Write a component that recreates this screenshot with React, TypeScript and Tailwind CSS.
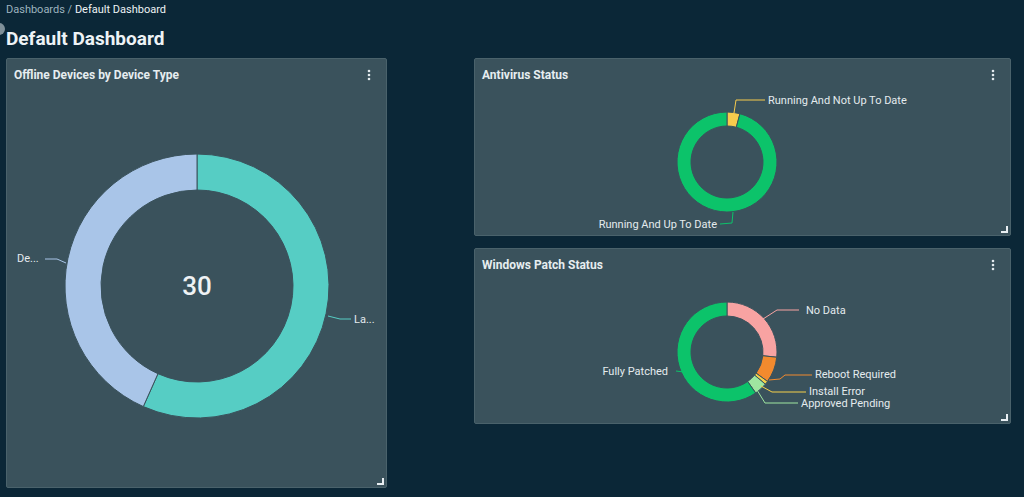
import React from "react";

const PANEL = "#3a525c";

type Seg = { from: number; to: number; color: string };

const pt = (cx: number, cy: number, r: number, deg: number) => {
  const a = ((deg - 90) * Math.PI) / 180;
  return [cx + r * Math.cos(a), cy + r * Math.sin(a)];
};

const arc = (cx: number, cy: number, ro: number, ri: number, a0: number, a1: number) => {
  const large = a1 - a0 > 180 ? 1 : 0;
  const [x0, y0] = pt(cx, cy, ro, a0);
  const [x1, y1] = pt(cx, cy, ro, a1);
  const [x2, y2] = pt(cx, cy, ri, a1);
  const [x3, y3] = pt(cx, cy, ri, a0);
  return `M${x0} ${y0} A${ro} ${ro} 0 ${large} 1 ${x1} ${y1} L${x2} ${y2} A${ri} ${ri} 0 ${large} 0 ${x3} ${y3} Z`;
};

const Donut = ({ cx, cy, ro, ri, segs }: { cx: number; cy: number; ro: number; ri: number; segs: Seg[] }) => (
  <g>
    {segs.map((s, i) => (
      <path key={i} d={arc(cx, cy, ro, ri, s.from, s.to)} fill={s.color} stroke={PANEL} strokeWidth={1} />
    ))}
  </g>
);

const Dots = () => (
  <svg width="4" height="12" viewBox="0 0 4 12" className="text-[#e3eaee]">
    <circle cx="2" cy="2" r="1.3" fill="currentColor" />
    <circle cx="2" cy="6" r="1.3" fill="currentColor" />
    <circle cx="2" cy="10" r="1.3" fill="currentColor" />
  </svg>
);

const Corner = () => (
  <div className="absolute right-[2px] bottom-[2px] w-[7px] h-[7px] border-r-2 border-b-2 border-[#e8eef2]" />
);

const Panel = ({ title, className, children }: { title: string; className: string; children: React.ReactNode }) => (
  <div className={`relative bg-[#3a525c] border border-[#4a626b] rounded-[2px] flex flex-col ${className}`}>
    <div className="h-[30px] flex items-center justify-between pl-[7px] pr-[15px] pt-[1px]">
      <span className="text-[12px] font-bold text-[#e6edf0]">{title}</span>
      <Dots />
    </div>
    {children}
    <Corner />
  </div>
);

const lbl = "fill-[#e4ebee] text-[11px]";

export default function App() {
  return (
    <div className="w-[1024px] h-[497px] bg-[#0b2737] overflow-hidden relative font-['Roboto','Liberation_Sans',sans-serif]">
      <div className="absolute left-[-7px] top-[23px] w-[12px] h-[12px] rounded-full bg-[#7f9099]" />
      <div className="pl-[6px] pt-[3px] text-[11px] leading-[14px]">
        <span className="text-[#9db3be]">Dashboards / </span>
        <span className="text-[#eef3f5]">Default Dashboard</span>
      </div>
      <h1 className="pl-[6px] mt-[11px] text-[19px] leading-[22px] font-bold text-[#eef3f6]">Default Dashboard</h1>
      <div className="flex pl-[6px] mt-[8px] gap-[87px]">
        <Panel title="Offline Devices by Device Type" className="w-[381px] h-[430px]">
          <svg width="379" height="398" viewBox="0 0 379 398">
            <Donut
              cx={190}
              cy={197}
              ro={132}
              ri={96}
              segs={[
                { from: 0, to: 204, color: "#56cdc4" },
                { from: 204, to: 360, color: "#a9c5e8" },
              ]}
            />
            <text x={190} y={206} textAnchor="middle" className="fill-[#eef2f4] text-[26px] font-medium">30</text>
            <path d="M38 170 L50 170 L59 174" stroke="#a9c5e8" fill="none" strokeWidth={1} />
            <text x={10} y={173} className={lbl}>De...</text>
            <path d="M321 227 L333 230 L344 230" stroke="#56cdc4" fill="none" strokeWidth={1} />
            <text x={347} y={234} className={lbl}>La...</text>
          </svg>
        </Panel>
        <div className="flex flex-col gap-[12px]">
          <Panel title="Antivirus Status" className="w-[537px] h-[178px]">
            <svg width="535" height="146" viewBox="0 0 535 146">
              <Donut
                cx={252}
                cy={73}
                ro={50}
                ri={36}
                segs={[
                  { from: 0, to: 15, color: "#f7cb4d" },
                  { from: 15, to: 360, color: "#0cc36a" },
                ]}
              />
              <path d="M259 24 L261 11 L290 11" stroke="#f7cb4d" fill="none" strokeWidth={1} />
              <text x={293} y={15} className={lbl}>Running And Not Up To Date</text>
              <path d="M258 123 L257 134 L245 135" stroke="#0cc36a" fill="none" strokeWidth={1} />
              <text x={242} y={139} textAnchor="end" className={lbl}>Running And Up To Date</text>
            </svg>
          </Panel>
          <Panel title="Windows Patch Status" className="w-[537px] h-[176px]">
            <svg width="535" height="144" viewBox="0 0 535 144">
              <Donut
                cx={252}
                cy={73}
                ro={50}
                ri={36}
                segs={[
                  { from: 0, to: 96, color: "#f8a3a2" },
                  { from: 96, to: 126, color: "#f28a2e" },
                  { from: 126, to: 130, color: "#f5d04a" },
                  { from: 130, to: 145, color: "#9fe6a0" },
                  { from: 145, to: 360, color: "#0cc36a" },
                ]}
              />
              <path d="M288 40 L302 31 L324 31" stroke="#f8a3a2" fill="none" strokeWidth={1} />
              <text x={331} y={35} className={lbl}>No Data</text>
              <path d="M294 101 L305 100 L310 96 L337 96" stroke="#f28a2e" fill="none" strokeWidth={1} />
              <text x={340} y={99} className={lbl}>Reboot Required</text>
              <path d="M286 107 L297 113 L331 113" stroke="#f5d04a" fill="none" strokeWidth={1} />
              <text x={334} y={116} className={lbl}>Install Error</text>
              <path d="M282 111 L290 124 L323 124" stroke="#9fe6a0" fill="none" strokeWidth={1} />
              <text x={326} y={128} className={lbl}>Approved Pending</text>
              <path d="M201 92 L209 93 L217 90" stroke="#0cc36a" fill="none" strokeWidth={1} />
              <text x={193} y={96} textAnchor="end" className={lbl}>Fully Patched</text>
            </svg>
          </Panel>
        </div>
      </div>
    </div>
  );
}
